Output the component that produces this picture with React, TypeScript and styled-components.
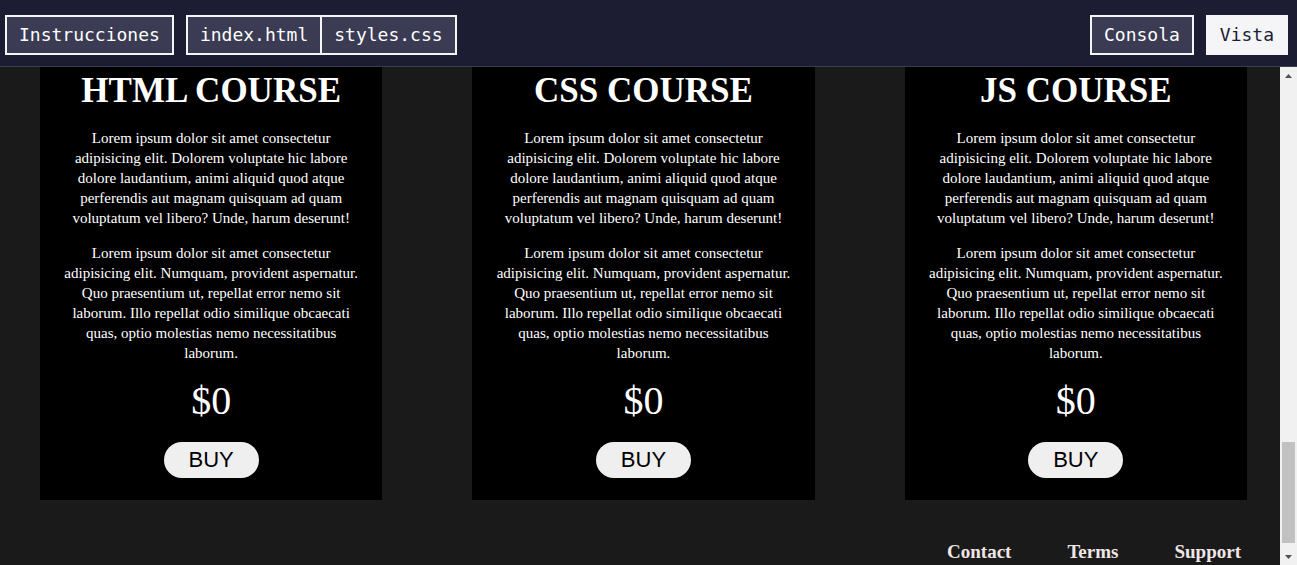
import React from 'react'
import styled, { createGlobalStyle } from 'styled-components'

const GlobalStyle = createGlobalStyle`
  html, body {
    margin: 0;
    padding: 0;
    background: #1a1a1a;
  }
  * { box-sizing: border-box; }
`

const Shell = styled.div`
  height: 565px;
  display: flex;
  flex-direction: column;
  overflow: hidden;
`

const TopBar = styled.header`
  height: 67px;
  flex: 0 0 67px;
  background: #1c1d33;
  border-bottom: 1px solid #3b3c53;
  display: flex;
  align-items: center;
  justify-content: space-between;
  padding: 4px 9px 0 5px;
`

const BarGroup = styled.div`
  display: flex;
  gap: 12px;
`

const TabSet = styled.div`
  display: flex;
  border: 2px solid #f5f5f7;
  > button { border: none; height: 36px; }
  > button + button { border-left: 2px solid #f5f5f7; }
`

const Tab = styled.button<{ $active?: boolean }>`
  height: 40px;
  padding: 0 12px;
  border: 2px solid #f5f5f7;
  background: ${p => (p.$active ? '#f5f5f7' : '#3b3c53')};
  color: ${p => (p.$active ? '#1c1d33' : '#ffffff')};
  font-family: "DejaVu Sans Mono", "Liberation Mono", monospace;
  font-size: 18px;
  line-height: 1;
  cursor: pointer;
`

const Body = styled.div`
  flex: 1;
  display: flex;
  min-height: 0;
`

const Viewport = styled.main`
  flex: 1;
  background: #1a1a1a;
  overflow: hidden;
`

const Cards = styled.section`
  display: flex;
  gap: 90px;
  padding: 0 33px 0 40px;
`

const Card = styled.article`
  flex: 1;
  background: #000;
  color: #fff;
  text-align: center;
  padding: 5px 20px 22px;
  font-family: "Liberation Serif", "Times New Roman", serif;
  display: flex;
  flex-direction: column;
  align-items: center;
`

const CardTitle = styled.h2`
  margin: 0 0 18px;
  font-size: 35px;
  line-height: 38px;
  font-weight: 700;
`

const Text = styled.p`
  margin: 0 0 15px;
  font-size: 15px;
  line-height: 20px;
`

const Price = styled.div`
  font-size: 40px;
  line-height: 46px;
`

const BuyButton = styled.button`
  margin-top: 18px;
  height: 36px;
  padding: 0 25px;
  border: none;
  border-radius: 18px;
  background: #efefef;
  color: #000;
  font-family: "Liberation Sans", Arial, sans-serif;
  font-size: 22px;
  cursor: pointer;
`

const Footer = styled.footer`
  display: flex;
  justify-content: flex-end;
  gap: 56px;
  padding: 41px 39px 0 0;
`

const FooterLink = styled.a`
  color: #f0e6e6;
  font-family: "Liberation Serif", "Times New Roman", serif;
  font-weight: 700;
  font-size: 19px;
  text-decoration: none;
`

const Scrollbar = styled.div`
  flex: 0 0 17px;
  width: 17px;
  background: #f1f1f1;
  display: flex;
  flex-direction: column;
`

const ScrollArrow = styled.div`
  height: 17px;
  flex: 0 0 17px;
  display: flex;
  align-items: center;
  justify-content: center;
`

const Track = styled.div`
  flex: 1;
  padding: 0 2px;
`

const Thumb = styled.div<{ $top: number; $size: number }>`
  margin-top: ${p => p.$top}px;
  height: ${p => p.$size}px;
  background: #c1c1c1;
`

const lorem1 =
  'Lorem ipsum dolor sit amet consectetur adipisicing elit. Dolorem voluptate hic labore dolore laudantium, animi aliquid quod atque perferendis aut magnam quisquam ad quam voluptatum vel libero? Unde, harum deserunt!'
const lorem2 =
  'Lorem ipsum dolor sit amet consectetur adipisicing elit. Numquam, provident aspernatur. Quo praesentium ut, repellat error nemo sit laborum. Illo repellat odio similique obcaecati quas, optio molestias nemo necessitatibus laborum.'

const courses = ['HTML COURSE', 'CSS COURSE', 'JS COURSE']

export default function App() {
  return (
    <Shell>
      <GlobalStyle />
      <TopBar>
        <BarGroup>
          <Tab>Instrucciones</Tab>
          <TabSet>
            <Tab>index.html</Tab>
            <Tab>styles.css</Tab>
          </TabSet>
        </BarGroup>
        <BarGroup>
          <Tab>Consola</Tab>
          <Tab $active>Vista</Tab>
        </BarGroup>
      </TopBar>
      <Body>
        <Viewport>
          <Cards>
            {courses.map(c => (
              <Card key={c}>
                <CardTitle>{c}</CardTitle>
                <Text>{lorem1}</Text>
                <Text>{lorem2}</Text>
                <Price>$0</Price>
                <BuyButton>BUY</BuyButton>
              </Card>
            ))}
          </Cards>
          <Footer>
            <FooterLink href="#">Contact</FooterLink>
            <FooterLink href="#">Terms</FooterLink>
            <FooterLink href="#">Support</FooterLink>
          </Footer>
        </Viewport>
        <Scrollbar>
          <ScrollArrow>
            <svg width="7" height="4" viewBox="0 0 7 4">
              <path d="M0 4 L3.5 0 L7 4 Z" fill="#505050" />
            </svg>
          </ScrollArrow>
          <Track>
            <Thumb $top={358} $size={101} />
          </Track>
          <ScrollArrow>
            <svg width="7" height="4" viewBox="0 0 7 4">
              <path d="M0 0 L7 0 L3.5 4 Z" fill="#505050" />
            </svg>
          </ScrollArrow>
        </Scrollbar>
      </Body>
    </Shell>
  )
}
